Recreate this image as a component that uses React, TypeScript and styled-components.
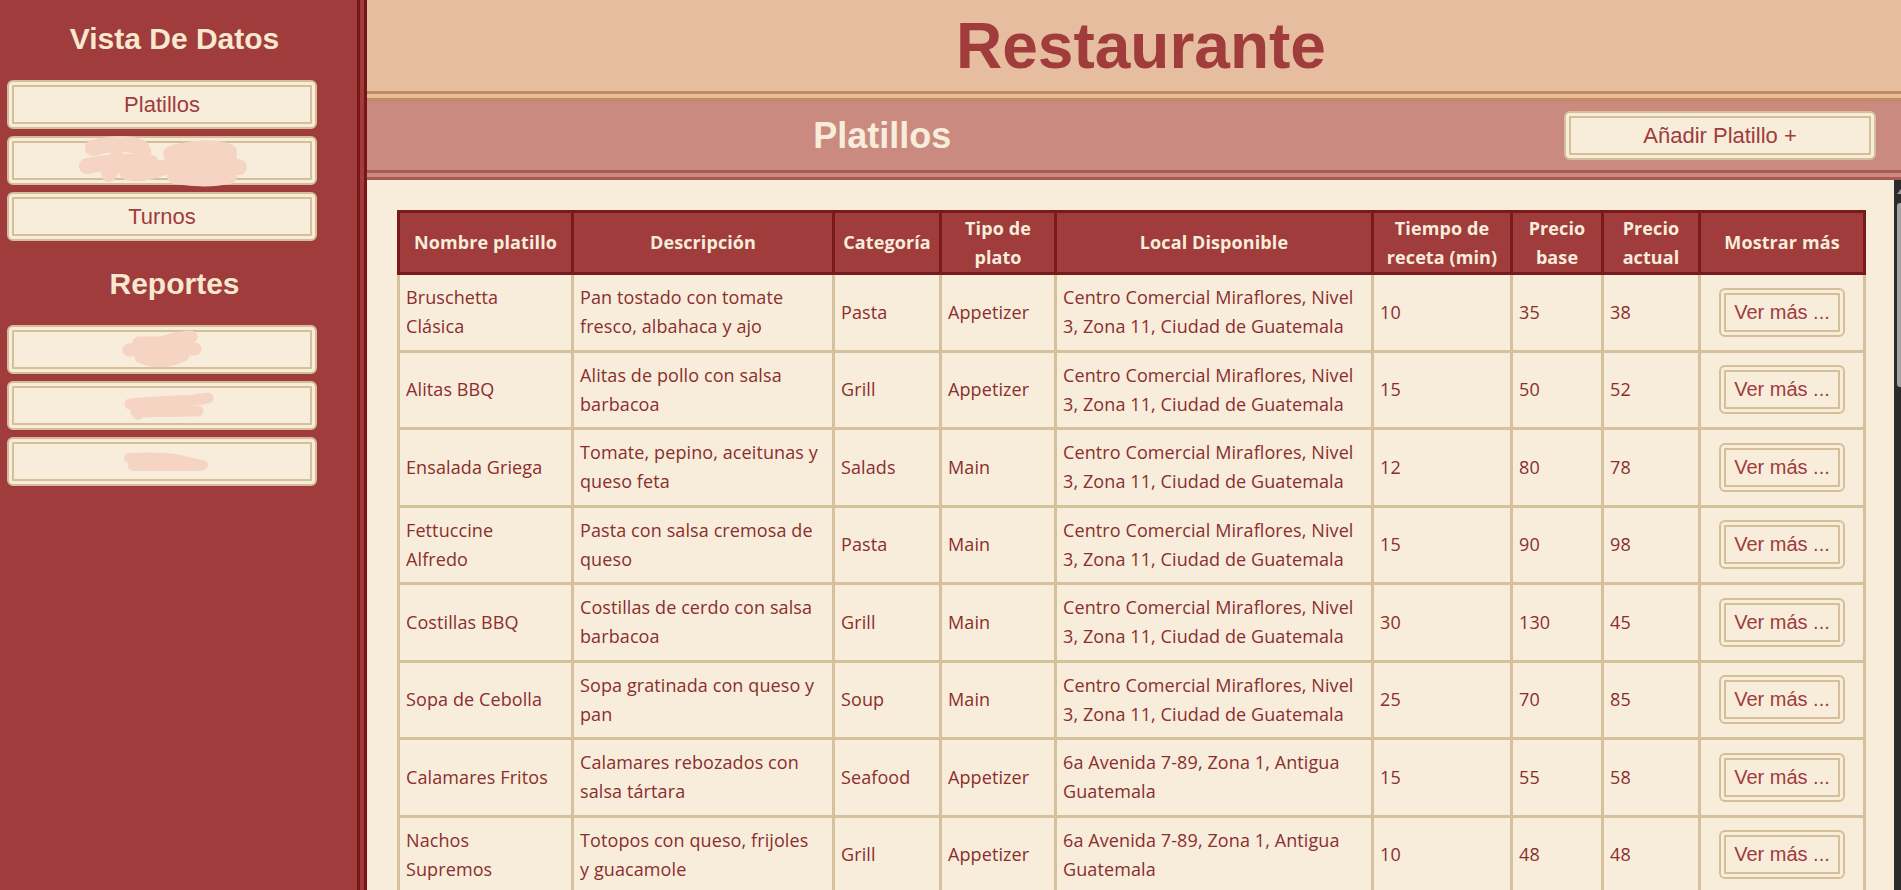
import React from "react";
import styled, { createGlobalStyle } from "styled-components";

const GlobalStyle = createGlobalStyle`
  html, body { margin: 0; padding: 0; height: 100%; overflow: hidden; }
  body { font-family: "Liberation Sans", Arial, sans-serif; background: #f8eddb; }
  #root { height: 100%; }
  *, *::before, *::after { box-sizing: border-box; }
`;

const Layout = styled.div`
  display: flex;
  height: 100vh;
`;

const Sidebar = styled.aside`
  width: 367px;
  flex: none;
  background: #a03c3c;
  border-right: 10px double #771616;
  padding: 22px 8px 0 0;
`;

const SideHeading = styled.h2<{ $spaced?: boolean }>`
  margin: ${(p) => (p.$spaced ? "26px" : "0")} 0 24px;
  font-family: "Liberation Sans", Arial, sans-serif;
  font-size: 30px;
  line-height: 34px;
  font-weight: 700;
  color: #f8e8cf;
  text-align: center;
`;

const NavList = styled.nav`
  display: flex;
  flex-direction: column;
  gap: 7px;
  padding-left: 7px;
`;

const FrameButton = styled.button`
  display: inline-flex;
  align-items: center;
  justify-content: center;
  height: 49px;
  padding: 0 8px;
  background: #f8eddb;
  border: 7px double #d4bf98;
  border-radius: 6px;
  color: #a03c3c;
  font-family: "Liberation Sans", Arial, sans-serif;
  font-size: 22px;
  cursor: pointer;
`;

const NavButton = styled(FrameButton)`
  width: 310px;
  overflow: visible;
`;

const Scribble = styled.svg<{ $dx?: number }>`
  flex: none;
  margin-left: ${(p) => p.$dx ?? 0}px;
  overflow: visible;
`;

const Main = styled.main`
  flex: 1;
  min-width: 0;
  display: flex;
  flex-direction: column;
`;

const TitleBar = styled.header`
  flex: none;
  height: 101px;
  background: #e6bd9f;
  border-bottom: 10px double #c48b5d;
  display: flex;
  align-items: center;
  justify-content: center;
  padding-left: 14px;
`;

const Title = styled.h1`
  margin: 0;
  font-family: "Liberation Sans", Arial, sans-serif;
  font-size: 64px;
  font-weight: 700;
  color: #a03c3c;
`;

const SectionBar = styled.div`
  flex: none;
  height: 79px;
  background: #cb8a80;
  border-bottom: 10px double #a85b52;
  display: grid;
  grid-template-columns: 2fr 1fr;
  align-items: center;
`;

const SectionTitle = styled.h2`
  margin: 0;
  padding-left: 8px;
  font-family: "Liberation Sans", Arial, sans-serif;
  font-size: 36px;
  font-weight: 700;
  color: #f8eddb;
  text-align: center;
`;

const AddButton = styled(FrameButton)`
  width: 312px;
  justify-self: end;
  margin-right: 25px;
`;

const ContentWrap = styled.div`
  flex: 1;
  min-height: 0;
  display: flex;
`;

const Content = styled.section`
  flex: 1;
  min-width: 0;
  overflow-y: auto;
  scrollbar-width: none;
  padding: 30px 31px 30px 30px;
  background: #f8eddb;
  &::-webkit-scrollbar { display: none; }
`;

const ScrollTrack = styled.div`
  flex: none;
  width: 7px;
  background: #2b2b2b;
  display: flex;
  flex-direction: column;
  align-items: flex-end;
  padding-top: 9px;
`;

const ScrollArrow = styled.div`
  width: 0;
  height: 0;
  border-left: 4px solid transparent;
  border-bottom: 5px solid #9a9a9a;
`;

const ScrollThumb = styled.div`
  margin-top: 9px;
  width: 4px;
  height: 184px;
  background: #a3a3a3;
  border-radius: 3px 0 0 3px;
`;

const Table = styled.table`
  width: 100%;
  table-layout: fixed;
  border-collapse: collapse;
  font-family: "Open Sans", "Noto Sans", sans-serif;
  font-size: 18px;
  letter-spacing: 0.1px;
`;

const Th = styled.th`
  background: #a03c3c;
  color: #f8eddb;
  border: 3px solid #7a1b1b;
  padding: 1px 6px;
  line-height: 28.5px;
  font-weight: 700;
  text-align: center;
  vertical-align: middle;
`;

const Td = styled.td<{ $center?: boolean; $narrow?: boolean }>`
  border: 3px solid #d5c19c;
  padding: 8px ${(p) => (p.$narrow ? "15px" : "6px")} 8px 6px;
  line-height: 29.25px;
  color: #8b2e2e;
  vertical-align: middle;
  text-align: ${(p) => (p.$center ? "center" : "left")};
`;

const MoreButton = styled(FrameButton)`
  font-size: 20px;
  letter-spacing: 0;
  padding: 0 8px;
`;

const CC = "Centro Comercial Miraflores, Nivel 3, Zona 11, Ciudad de Guatemala";
const AV = "6a Avenida 7-89, Zona 1, Antigua Guatemala";

type Dish = [string, string, string, string, string, number, number, number];

const dishes: Dish[] = [
  ["Bruschetta Clásica", "Pan tostado con tomate fresco, albahaca y ajo", "Pasta", "Appetizer", CC, 10, 35, 38],
  ["Alitas BBQ", "Alitas de pollo con salsa barbacoa", "Grill", "Appetizer", CC, 15, 50, 52],
  ["Ensalada Griega", "Tomate, pepino, aceitunas y queso feta", "Salads", "Main", CC, 12, 80, 78],
  ["Fettuccine Alfredo", "Pasta con salsa cremosa de queso", "Pasta", "Main", CC, 15, 90, 98],
  ["Costillas BBQ", "Costillas de cerdo con salsa barbacoa", "Grill", "Main", CC, 30, 130, 45],
  ["Sopa de Cebolla", "Sopa gratinada con queso y pan", "Soup", "Main", CC, 25, 70, 85],
  ["Calamares Fritos", "Calamares rebozados con salsa tártara", "Seafood", "Appetizer", AV, 15, 55, 58],
  ["Nachos Supremos", "Totopos con queso, frijoles y\u00a0guacamole", "Grill", "Appetizer", AV, 10, 48, 48],
];

const columns: [string, number][] = [
  ["Nombre platillo", 174],
  ["Descripción", 261],
  ["Categoría", 107],
  ["Tipo de plato", 115],
  ["Local Disponible", 317],
  ["Tiempo de receta (min)", 139],
  ["Precio base", 91],
  ["Precio actual", 97],
  ["Mostrar más", 165],
];

const INK = "#f5d4c3";

function ScribbleA() {
  return (
    <Scribble width="170" height="46" viewBox="0 0 170 46" aria-hidden>
      <g stroke={INK} strokeWidth="16" strokeLinecap="round" strokeLinejoin="round" fill="none">
        <path d="M16 10 C32 5 50 5 62 9 C70 13 66 20 58 23" />
        <path d="M10 28 C28 24 52 23 74 25" />
        <path d="M32 36 L40 20" />
        <path d="M50 34 C62 37 74 34 84 30" />
        <path d="M94 16 C112 10 136 8 152 14" />
        <path d="M90 29 C116 25 142 25 162 29" />
        <path d="M98 38 C118 41 138 41 152 38" />
        <path d="M102 22 L152 20" />
      </g>
    </Scribble>
  );
}

function ScribbleB() {
  return (
    <Scribble width="82" height="38" viewBox="0 0 82 38" aria-hidden>
      <g stroke={INK} strokeWidth="13" strokeLinecap="round" strokeLinejoin="round" fill="none">
        <path d="M8 19 C25 17 55 17 74 18" />
        <path d="M40 12 C52 8 62 6 70 6" />
        <path d="M20 26 C35 32 50 30 62 24" />
        <path d="M18 12 L48 12" />
      </g>
    </Scribble>
  );
}

function ScribbleC() {
  return (
    <Scribble width="90" height="28" viewBox="0 0 90 28" $dx={14} aria-hidden>
      <g stroke={INK} strokeWidth="11" strokeLinecap="round" strokeLinejoin="round" fill="none">
        <path d="M6 12 C30 10 55 9 70 8 C78 7 83 6 84 6" />
        <path d="M12 20 L74 19" />
        <path d="M12 18 L14 22" />
      </g>
    </Scribble>
  );
}

function ScribbleD() {
  return (
    <Scribble width="86" height="20" viewBox="0 0 86 20" $dx={8} aria-hidden>
      <g stroke={INK} strokeWidth="10" strokeLinecap="round" strokeLinejoin="round" fill="none">
        <path d="M6 6 C25 5 45 5 58 8 C66 11 74 12 80 13" />
        <path d="M10 14 L78 14" />
      </g>
    </Scribble>
  );
}

export default function App() {
  return (
    <>
      <GlobalStyle />
      <Layout>
        <Sidebar>
          <SideHeading>Vista De Datos</SideHeading>
          <NavList>
            <NavButton>Platillos</NavButton>
            <NavButton aria-label="oculto">
              <ScribbleA />
            </NavButton>
            <NavButton>Turnos</NavButton>
          </NavList>
          <SideHeading $spaced>Reportes</SideHeading>
          <NavList>
            <NavButton aria-label="oculto">
              <ScribbleB />
            </NavButton>
            <NavButton aria-label="oculto">
              <ScribbleC />
            </NavButton>
            <NavButton aria-label="oculto">
              <ScribbleD />
            </NavButton>
          </NavList>
        </Sidebar>
        <Main>
          <TitleBar>
            <Title>Restaurante</Title>
          </TitleBar>
          <SectionBar>
            <SectionTitle>Platillos</SectionTitle>
            <AddButton>Añadir Platillo +</AddButton>
          </SectionBar>
          <ContentWrap>
            <Content>
              <Table>
                <colgroup>
                  {columns.map(([name, w]) => (
                    <col key={name} style={{ width: w }} />
                  ))}
                </colgroup>
                <thead>
                  <tr>
                    {columns.map(([name]) => (
                      <Th key={name}>{name}</Th>
                    ))}
                  </tr>
                </thead>
                <tbody>
                  {dishes.map((d) => (
                    <tr key={d[0]}>
                      <Td $narrow>{d[0]}</Td>
                      <Td>{d[1]}</Td>
                      <Td>{d[2]}</Td>
                      <Td>{d[3]}</Td>
                      <Td>{d[4]}</Td>
                      <Td>{d[5]}</Td>
                      <Td>{d[6]}</Td>
                      <Td>{d[7]}</Td>
                      <Td $center>
                        <MoreButton>Ver más ...</MoreButton>
                      </Td>
                    </tr>
                  ))}
                </tbody>
              </Table>
            </Content>
            <ScrollTrack aria-hidden>
              <ScrollArrow />
              <ScrollThumb />
            </ScrollTrack>
          </ContentWrap>
        </Main>
      </Layout>
    </>
  );
}
